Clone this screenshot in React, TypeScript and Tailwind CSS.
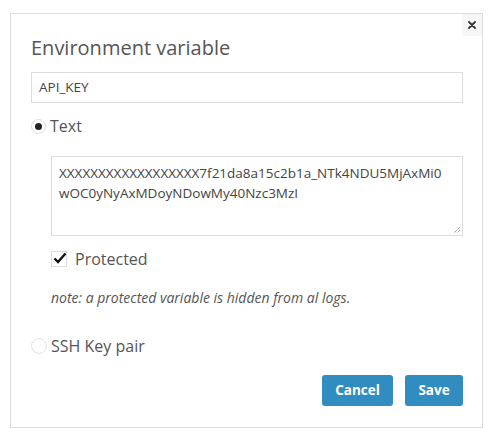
import React from "react";

export default function App() {
  return (
    <div className="w-[495px] h-[440px] bg-white pt-[13px] pl-[10px]" style={{ fontFamily: '"Open Sans", sans-serif' }}>
      <div className="relative w-[473px] h-[415px] border border-[#dcdcdc] bg-white text-[#555]">
        <button className="absolute right-0 top-0 w-[20px] h-[22px] bg-[#f7f7f7] flex items-center justify-center">
          <svg width="8" height="8" viewBox="0 0 8 8">
            <path d="M1 1 L7 7 M7 1 L1 7" stroke="#333" strokeWidth="1.8" strokeLinecap="round" />
          </svg>
        </button>
        <div className="pl-[20px] pr-[19px]">
          <h1 className="text-[20px] leading-[26px] mt-[21px] text-[#555]">Environment variable</h1>
          <div className="mt-[11px] h-[31px] border border-[#ddd] flex items-center px-[7px] text-[13.5px] text-[#444]">API_KEY</div>
          <div className="mt-[8px] flex items-center h-[30px]">
            <span className="w-[15px] h-[15px] rounded-full border border-[#ddd] flex items-center justify-center">
              <span className="w-[7px] h-[7px] rounded-full bg-[#222]" />
            </span>
            <span className="ml-[4px] text-[16px] text-[#555]">Text</span>
          </div>
          <div className="pl-[20px]">
            <div className="relative mt-[15px] h-[80px] border border-[#ddd] px-[7px] pt-[6px] text-[13.5px] leading-[20px] text-[#444] whitespace-nowrap">
              XXXXXXXXXXXXXXXXXX7f21da8a15c2b1a_NTk4NDU5MjAxMi0
              <br />
              wOC0yNyAxMDoyNDowMy40Nzc3MzI
              <svg className="absolute right-[1px] bottom-[1px]" width="9" height="9" viewBox="0 0 9 9">
                <path d="M8 2 L2 8 M8 5 L5 8" stroke="#777" strokeWidth="1" strokeDasharray="1 1" />
              </svg>
            </div>
            <div className="mt-[13px] flex items-center h-[20px]">
              <span className="relative w-[16px] h-[16px] border border-[#ddd]">
                <svg className="absolute left-[0px] top-[-2px]" width="16" height="16" viewBox="0 0 16 16">
                  <path d="M2.5 8.5 L6 12 L13.5 3.5" stroke="#111" strokeWidth="2.4" fill="none" />
                </svg>
              </span>
              <span className="ml-[8px] text-[16px] text-[#555]">Protected</span>
            </div>
            <p className="mt-[18px] text-[14px] italic text-[#555]">note: a protected variable is hidden from al logs.</p>
          </div>
          <div className="mt-[27px] flex items-center h-[22px]">
            <span className="w-[16px] h-[16px] rounded-full border border-[#e3e3e3]" />
            <span className="ml-[4px] text-[16px] text-[#555]">SSH Key pair</span>
          </div>
          <div className="mt-[18px] flex justify-end gap-[12px]">
            <button className="w-[71px] h-[31px] rounded-[3px] bg-[#318cbf] text-white text-[13.5px] font-bold">Cancel</button>
            <button className="w-[58px] h-[31px] rounded-[3px] bg-[#318cbf] text-white text-[13.5px] font-bold">Save</button>
          </div>
        </div>
      </div>
    </div>
  );
}
